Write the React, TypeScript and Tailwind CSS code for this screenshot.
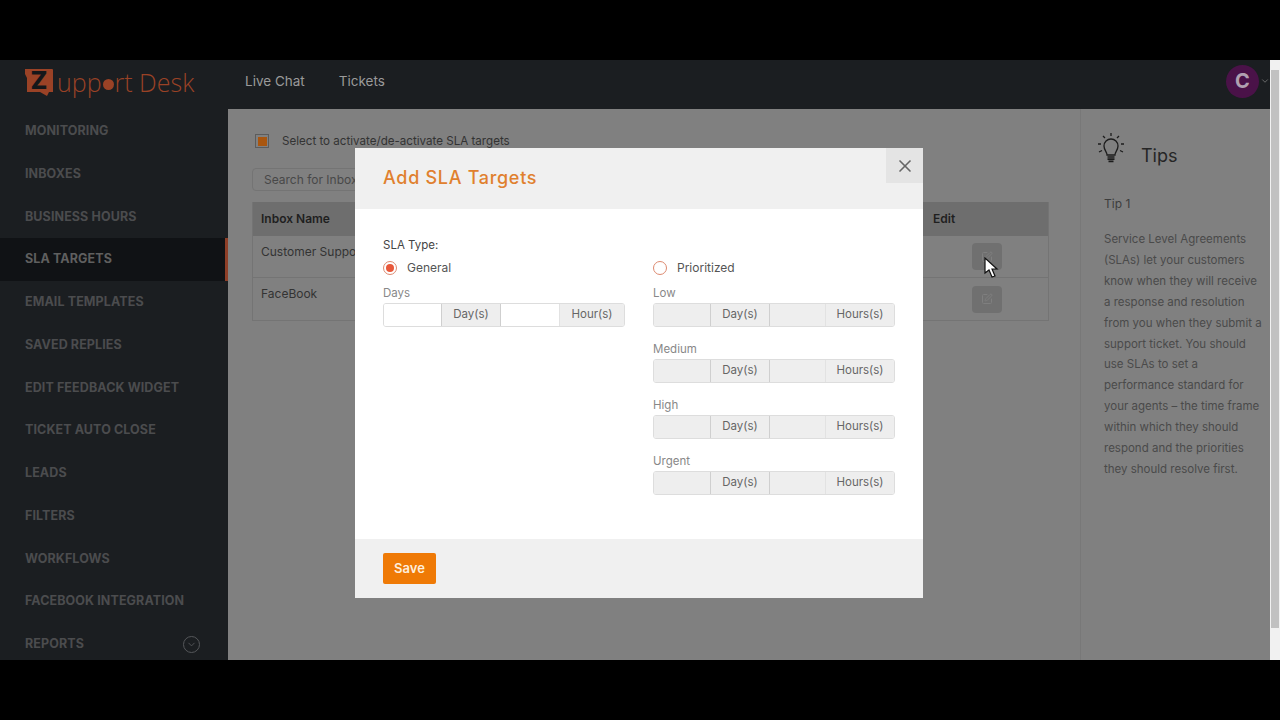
import { ChevronDown, X, SquarePen } from "lucide-react";

const navItems = [
  "MONITORING",
  "INBOXES",
  "BUSINESS HOURS",
  "SLA TARGETS",
  "EMAIL TEMPLATES",
  "SAVED REPLIES",
  "EDIT FEEDBACK WIDGET",
  "TICKET AUTO CLOSE",
  "LEADS",
  "FILTERS",
  "WORKFLOWS",
  "FACEBOOK INTEGRATION",
  "REPORTS",
];

const font = "font-['Inter','Liberation_Sans',sans-serif]";

function Logo() {
  return (
    <div className="flex items-center pl-[25px] text-[#9a4226]">
      <div className="relative flex h-[29px] w-[28px] shrink-0 items-start justify-center">
        <svg width="28" height="29" viewBox="0 0 28 29" className="absolute left-0 top-0">
          <path d="M0 1h27a1 1 0 0 1 1 1v22h-4l-2 4-7-4H2V10L0 6z" fill="#9a4226" />
        </svg>
        <span className="relative text-[25px] leading-[24px] font-extrabold text-[#15171a]">Z</span>
      </div>
      <div className="ml-[4px] flex items-center font-['Open_Sans',sans-serif] text-[25px] leading-[29px] font-light">
        <span>upp</span>
        <span className="mx-[1px] mt-[4px] h-[11px] w-[11px] rounded-full bg-[#9a4226]" />
        <span>rt Desk</span>
      </div>
    </div>
  );
}

function Sidebar() {
  return (
    <aside className="flex w-[228px] shrink-0 flex-col bg-[#1b1e21] pt-[1px]">
      {navItems.map((item) => {
        const active = item === "SLA TARGETS";
        return (
          <div
            key={item}
            className={`flex h-[42.75px] shrink-0 items-center justify-between pl-[25px] pr-[28px] text-[12.5px] font-bold tracking-[0.1px] ${
              active ? "border-r-[3px] border-[#8e3f28] bg-[#101215] text-[#5f5f5f]" : "text-[#4b4c4e]"
            }`}
          >
            {item}
            {item === "REPORTS" && (
              <span className="flex h-[17px] w-[17px] items-center justify-center rounded-full border border-[#55575a]">
                <ChevronDown size={11} className="text-[#55575a]" />
              </span>
            )}
          </div>
        );
      })}
    </aside>
  );
}

function EditButton() {
  return (
    <div className="flex h-[27px] w-[30px] items-center justify-center rounded-sm bg-[#707070]">
      <SquarePen size={12} className="text-[#7f7f7f]" />
    </div>
  );
}

function Background() {
  return (
    <main className="flex min-w-0 flex-1 bg-[#808080] text-[#2f2f2f]">
      <div className="w-[852px] shrink-0 px-[24px] pt-[25px]">
        <div className="flex h-[14px] items-center gap-[13px] pl-[3px] text-[11.6px] text-[#333]">
          <span className="flex h-[14px] w-[14px] items-center justify-center border border-[#5c5c5c]">
            <span className="h-[9px] w-[9px] bg-[#a9560f]" />
          </span>
          <span className="pt-[1px]">Select to activate/de-activate SLA targets</span>
        </div>
        <div className="mt-[20px] flex h-[23px] w-[300px] items-center rounded-sm border border-[#747474] px-[11px] text-[12px] text-[#484848]">
          Search for Inbox
        </div>
        <div className="mt-[11px] w-[797px] border-x border-b border-[#747474]">
          <div className="flex h-[34px] items-center justify-between bg-[#6e6e6e] pl-[8px] text-[12px] font-semibold text-[#1f1f1f]">
            <span>Inbox Name</span>
            <span className="w-[115px]">Edit</span>
          </div>
          <div className="flex h-[42px] items-center justify-between border-b border-[#747474] pl-[8px] pr-[46px] text-[12px] text-[#333]">
            <span className="pb-[10px]">Customer Support</span>
            <EditButton />
          </div>
          <div className="flex h-[42px] items-center justify-between pl-[8px] pr-[46px] text-[12px] text-[#333]">
            <span className="pb-[10px]">FaceBook</span>
            <EditButton />
          </div>
        </div>
      </div>
      <div className="flex-1 border-l border-[#787878] pl-[23px] pr-[6px] pt-[24px]">
        <div className="flex items-start">
          <svg width="26" height="32" viewBox="0 0 26 32" fill="none" stroke="#1c1c1c" strokeWidth="1.3" className="-ml-[6px]">
            <path d="M9 22c0-3-3-5-3-9a7 7 0 0 1 14 0c0 4-3 6-3 9z" />
            <path d="M9.5 24h7M9.5 26.2h7M10.5 28.4h5" strokeWidth="1.7" />
            <path d="M13 0v3M5 3l2 2M21 3l-2 2M0 11h3M23 11h3M1 19l3-1.5M25 19l-3-1.5" />
          </svg>
          <span className="ml-[17px] mt-[11px] text-[18px] leading-[24px] text-[#262626]">Tips</span>
        </div>
        <div className="mt-[27px] text-[12px] text-[#3d3d3d]">Tip 1</div>
        <p className="mt-[16px] text-[11.5px] leading-[20.9px] text-[#4a4a4a]">
          Service Level Agreements (SLAs) let your customers know when they will receive a response and resolution from you when they submit a support ticket. You should use SLAs to set a performance standard for your agents – the time frame within which they should respond and the priorities they should resolve first.
        </p>
      </div>
    </main>
  );
}

function TimeGroup({ muted, hourLabel }: { muted?: boolean; hourLabel: string }) {
  const field = muted ? "bg-[#eeeeee]" : "bg-white";
  return (
    <div className="mt-[3px] flex h-[24px] items-stretch overflow-hidden rounded-[3px] border border-[#dddddd] text-[11.5px] text-[#666]">
      <div className={`${muted ? "w-[56px]" : "w-[57px]"} ${field}`} />
      <div className="flex w-[60px] items-center justify-center border-x border-[#cfcfcf] bg-[#eeeeee]">Day(s)</div>
      <div className={`${muted ? "w-[55px]" : "w-[58px]"} ${field}`} />
      <div className="flex flex-1 items-center justify-center border-l border-[#e2e2e2] bg-[#eeeeee]">{hourLabel}</div>
    </div>
  );
}

function Radio({ checked, label }: { checked?: boolean; label: string }) {
  return (
    <div className="flex h-[14px] items-center gap-[10px] text-[12px] text-[#555]">
      <span className="flex h-[14px] w-[14px] items-center justify-center rounded-full border border-[#dd8a70]">
        {checked && <span className="h-[8px] w-[8px] rounded-full bg-[#e8583a]" />}
      </span>
      {label}
    </div>
  );
}

function Modal() {
  const levels = ["Low", "Medium", "High", "Urgent"];
  return (
    <div className="absolute left-[355px] top-[88px] flex h-[450px] w-[568px] flex-col bg-white">
      <div className="relative flex h-[61px] shrink-0 items-center bg-[#f0f0f0] pb-[2px] pl-[28px] text-[18px] font-medium tracking-[0.7px] text-[#e0802e]">
        Add SLA Targets
        <span className="absolute right-0 top-0 flex h-[35px] w-[37px] items-center justify-center bg-[#e4e4e4]">
          <X size={20} className="text-[#666]" />
        </span>
      </div>
      <div className="flex flex-1 gap-[28px] px-[28px] pt-[29px] text-[11.5px]">
        <div className="w-[242px]">
          <div className="h-[14px] leading-[14px] text-[#444]">SLA Type:</div>
          <div className="mt-[9px]">
            <Radio checked label="General" />
          </div>
          <div className="mt-[11px] h-[14px] leading-[14px] text-[#888]">Days</div>
          <TimeGroup hourLabel="Hour(s)" />
        </div>
        <div className="w-[242px] pt-[23px]">
          <Radio label="Prioritized" />
          {levels.map((level, i) => (
            <div key={level} className={i === 0 ? "mt-[11px]" : "mt-[15px]"}>
              <div className="h-[14px] leading-[14px] text-[#888]">{level}</div>
              <TimeGroup muted hourLabel="Hours(s)" />
            </div>
          ))}
        </div>
      </div>
      <div className="flex h-[59px] shrink-0 items-center bg-[#f0f0f0] pl-[28px]">
        <button className="h-[31px] w-[53px] rounded-[2px] bg-[#ef7a06] text-[13px] font-semibold text-[#fdeedd]">Save</button>
      </div>
    </div>
  );
}

export default function App() {
  return (
    <div className={`flex h-screen flex-col justify-center overflow-hidden bg-black ${font}`}>
      <div className="relative flex h-[600px]">
        <div className="flex w-[1270px] flex-col">
          <header className="flex h-[49px] shrink-0 items-center bg-[#1b1e21] pb-[7px]">
            <div className="w-[228px] pt-[3px]">
              <Logo />
            </div>
            <nav className="flex gap-[34px] pl-[17px] text-[13.5px] text-[#9a9a9a]">
              <span>Live Chat</span>
              <span>Tickets</span>
            </nav>
            <div className="ml-auto flex items-center">
              <span className="flex h-[33px] w-[33px] items-center justify-center rounded-full bg-[#4a1248] text-[20px] font-bold text-[#b0a0b0]">C</span>
              <ChevronDown size={10} className="ml-[1px] text-[#777]" />
            </div>
          </header>
          <div className="flex min-h-0 flex-1">
            <Sidebar />
            <Background />
          </div>
        </div>
        <div className="flex w-[10px] flex-col bg-[#f1f1f1]">
          <div className="h-[10px]" />
          <div className="mx-[1px] h-[558px] bg-[#c1c1c1]" />
        </div>
        <Modal />
        <svg width="16" height="22" viewBox="0 0 16 22" className="absolute left-[984px] top-[197px]">
          <path d="M1 1v15l4-3 3 7 3-1-3-7h5z" fill="#fff" stroke="#111" strokeWidth="1.2" />
        </svg>
      </div>
    </div>
  );
}
